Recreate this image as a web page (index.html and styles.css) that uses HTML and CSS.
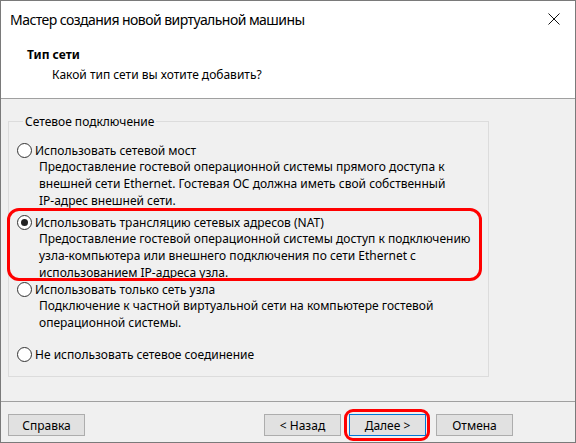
FILE: index.html
```html
<!DOCTYPE html>
<html>
<head>
  <title>Мастер создания новой виртуальной машины</title>
  <link rel="stylesheet" href="styles.css">
</head>
<body>
  <div class="window">
    <div class="titlebar">
      <span class="title">Мастер создания новой виртуальной машины</span>
      <svg class="close" width="12" height="12" viewBox="0 0 12 12">
        <path d="M0.5 0.5L11.5 11.5M11.5 0.5L0.5 11.5" stroke="#111" stroke-width="1" fill="none"/>
      </svg>
    </div>

    <div class="header">
      <h2 class="step">Тип сети</h2>
      <p class="question">Какой тип сети вы хотите добавить?</p>
    </div>

    <div class="content">
      <fieldset class="group">
        <legend>Сетевое подключение</legend>

        <div class="option">
          <label class="radio"><span class="dot"></span>Использовать сетевой мост</label>
          <p class="desc">Предоставление гостевой операционной системы прямого доступа к<br>внешней сети Ethernet. Гостевая ОС должна иметь свой собственный<br>IP-адрес внешней сети.</p>
        </div>

        <div class="option nat">
          <label class="radio"><span class="dot checked"></span>Использовать трансляцию сетевых адресов (NAT)</label>
          <p class="desc">Предоставление гостевой операционной системы доступ к подключению<br>узла-компьютера или внешнего подключения по сети Ethernet с<br>использованием IP-адреса узла.</p>
        </div>

        <div class="option host">
          <label class="radio"><span class="dot"></span>Использовать только сеть узла</label>
          <p class="desc">Подключение к частной виртуальной сети на компьютере гостевой<br>операционной системы.</p>
        </div>

        <div class="option none">
          <label class="radio"><span class="dot"></span>Не использовать сетевое соединение</label>
        </div>
      </fieldset>
    </div>

    <div class="footer">
      <button class="btn">Справка</button>
      <div class="spacer"></div>
      <button class="btn">&lt; Назад</button>
      <button class="btn default">Далее &gt;</button>
      <button class="btn">Отмена</button>
    </div>
  </div>
</body>
</html>
```

FILE: styles.css
```css
body {
  margin: 0;
  font-family: "Noto Sans", "Open Sans", sans-serif;
  font-size: 12px;
  color: #000;
  background-color: #f0f0f0;
}

.window {
  width: 576px;
  height: 443px;
  box-sizing: border-box;
  border: 1px solid #7a7a7a;
  background-color: #f0f0f0;
  display: flex;
  flex-direction: column;
}

.titlebar {
  height: 30px;
  background-color: #fff;
  display: flex;
  align-items: center;
  padding: 0 14px 0 9px;
}

.title {
  flex: 1;
  font-size: 14px;
  letter-spacing: -0.55px;
  padding-top: 6px;
}

.close {
  margin-top: 6px;
  margin-right: 1px;
}

.header {
  background-color: #fff;
  height: 67px;
  border-bottom: 1px solid #a0a0a0;
  padding-left: 26px;
}

.step {
  margin: 15px 0 0;
  font-size: 12px;
  font-weight: bold;
  line-height: 17px;
}

.question {
  margin: 3px 0 0 25px;
  line-height: 17px;
}

.content {
  height: 303px;
  padding: 14px 0 0 7px;
  box-sizing: border-box;
  border-bottom: 1px solid #a0a0a0;
}

.group {
  width: 481px;
  height: 264px;
  box-sizing: border-box;
  margin: 0;
  padding: 0 0 0 8px;
  border: 1px solid #dcdcdc;
}

legend {
  padding: 0 2px;
  margin-left: 6px;
  line-height: 17px;
}

.option {
  position: relative;
}

.radio {
  display: flex;
  align-items: center;
  line-height: 17px;
  margin-top: 12px;
  margin-bottom: -1px;
}

.dot {
  width: 15px;
  height: 15px;
  box-sizing: border-box;
  border: 1px solid #333;
  border-radius: 50%;
  background-color: #fff;
  margin-right: 3px;
  position: relative;
}

.dot.checked::after {
  content: "";
  position: absolute;
  left: 3px;
  top: 3px;
  width: 7px;
  height: 7px;
  border-radius: 50%;
  background-color: #222;
}

.desc {
  margin: 0 0 0 22px;
  line-height: 17px;
}

.nat .radio {
  margin-top: 5px;
}

.nat::before {
  content: "";
  position: absolute;
  left: -10px;
  top: -6px;
  width: 475px;
  height: 73px;
  box-sizing: border-box;
  border: 3px solid #f00;
  border-radius: 12px;
}

.host .radio {
  margin-top: 0;
}

.none .radio {
  margin-top: 15px;
}

.footer {
  flex: 1;
  display: flex;
  align-items: flex-start;
  padding: 12px 62px 0 7px;
  gap: 9px;
}

.spacer {
  flex: 1;
}

.btn {
  width: 77px;
  height: 22px;
  border: 1px solid #adadad;
  background-color: #e1e1e1;
  font-family: inherit;
  font-size: 12px;
  padding: 0;
}

.btn.default {
  border-color: #0078d7;
  position: relative;
  margin-left: -1px;
  margin-right: 1px;
}

.btn.default::before {
  content: "";
  position: absolute;
  left: -6px;
  top: -6px;
  right: -5px;
  bottom: -6px;
  border: 3px solid #f00;
  border-radius: 9px;
}
```
